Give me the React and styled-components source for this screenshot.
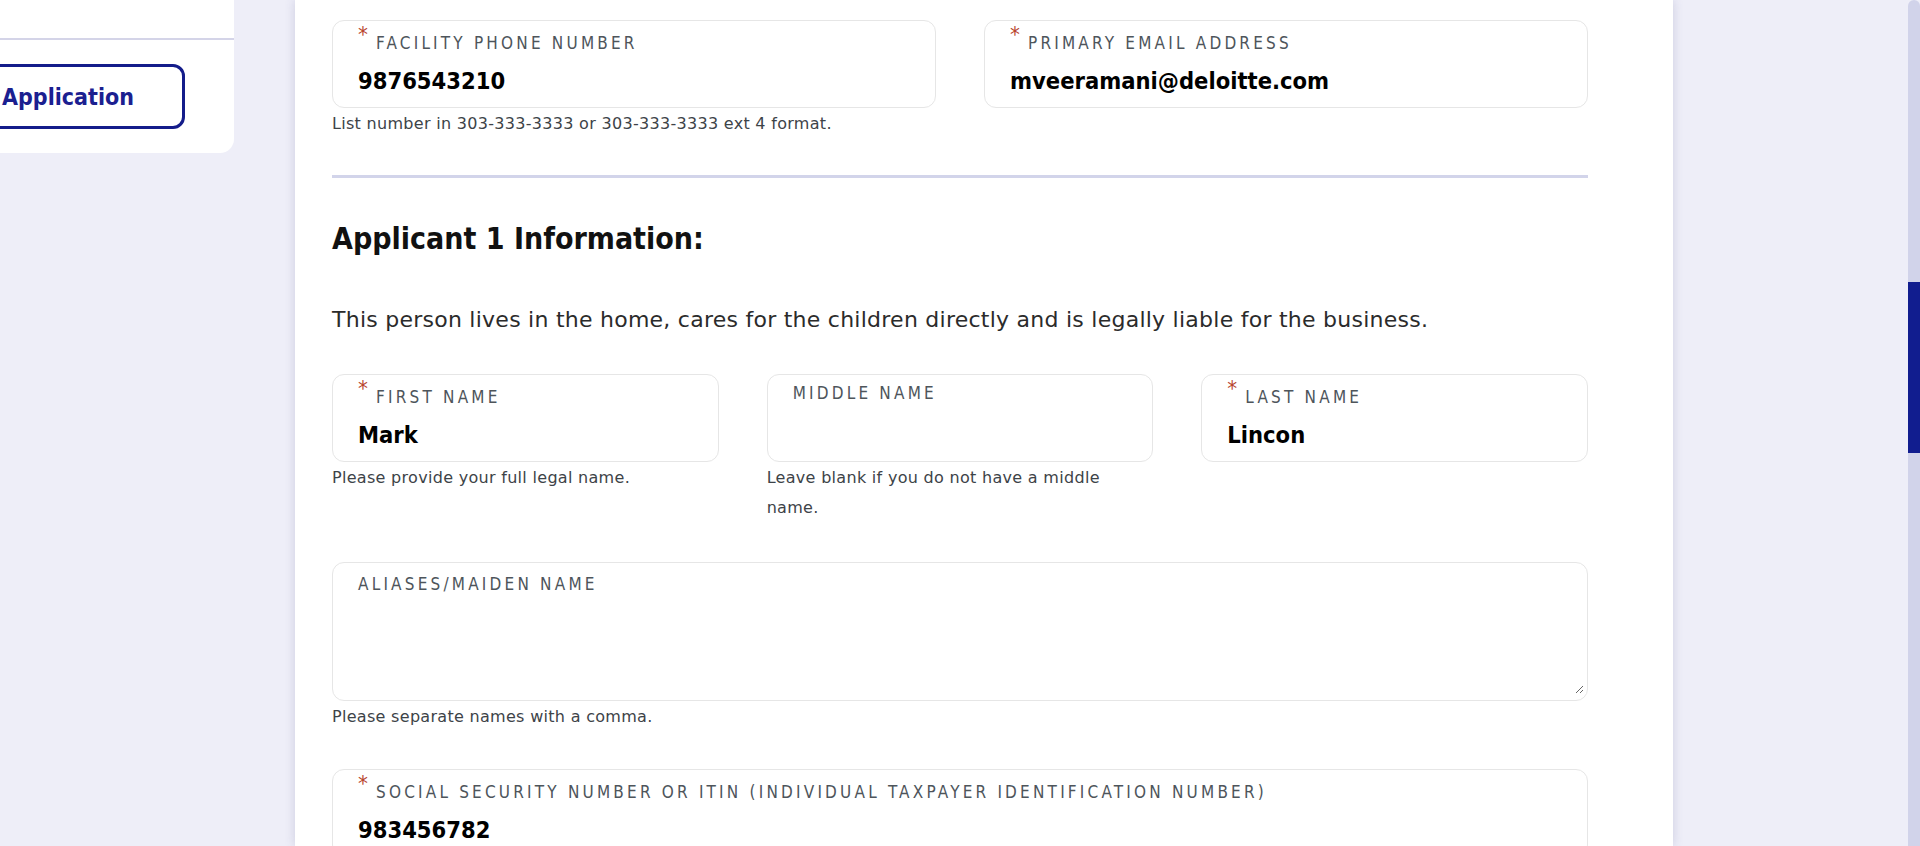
import styled, { createGlobalStyle } from "styled-components";

const GlobalStyle = createGlobalStyle`
  html, body {
    margin: 0;
    padding: 0;
    height: 100%;
    overflow: hidden;
    background: #eeeef8;
  }
  body {
    font-family: "DejaVu Sans Condensed", "DejaVu Sans", sans-serif;
    font-stretch: condensed;
    color: #222;
  }
`;

const Page = styled.div`
  display: flex;
  height: 846px;
  overflow: hidden;
`;

const Sidebar = styled.aside`
  flex: none;
  width: 234px;
  align-self: flex-start;
  background: #fff;
  border-radius: 0 0 14px 0;
  padding-top: 38px;
`;

const SideDivider = styled.div`
  height: 2px;
  background: #d4d4e8;
`;

const SideActions = styled.div`
  display: flex;
  justify-content: flex-end;
  overflow: hidden;
  padding: 24px 49px 24px 0;
`;

const OutlineButton = styled.button`
  flex: none;
  height: 65px;
  padding: 0 48px;
  border: 3px solid #141c8a;
  border-radius: 12px;
  background: #fff;
  color: #1b2090;
  font-family: inherit;
  font-stretch: condensed;
  font-size: 23px;
  font-weight: 700;
  white-space: nowrap;
  cursor: pointer;
`;

const Card = styled.main`
  flex: none;
  box-sizing: border-box;
  width: 1378px;
  margin-left: 61px;
  padding: 20px 85px 0 37px;
  background: #fff;
  box-shadow: 0 0 10px rgba(70, 70, 130, 0.2);
`;

const Grid = styled.div`
  display: grid;
  grid-template-columns: repeat(${({ $cols }) => $cols}, 1fr);
  column-gap: 48px;
  align-items: start;
  margin-top: ${({ $mt }) => $mt || 0}px;
`;

const FieldBox = styled.div`
  box-sizing: border-box;
  height: ${({ $h }) => $h || 88}px;
  display: flex;
  flex-direction: column;
  padding: 3px 20px 0 25px;
  border: 1px solid #e6e6e6;
  border-radius: 12px;
  background: #fff;
`;

const LabelRow = styled.div`
  display: flex;
  align-items: flex-start;
`;

const Star = styled.span`
  flex: none;
  width: 18px;
  font-size: 22px;
  line-height: 22px;
  color: #b8452e;
`;

const Label = styled.label`
  margin-top: ${({ $mt }) => $mt}px;
  font-size: 17px;
  line-height: 20px;
  letter-spacing: 3.2px;
  text-transform: uppercase;
  color: #4e555b;
`;

const Value = styled.div`
  margin-top: 13px;
  font-size: 23.5px;
  line-height: 30px;
  font-weight: 700;
  color: #000;
`;

const TextArea = styled.textarea`
  flex: 1;
  margin: 0 -17px 6px 0;
  border: none;
  outline: none;
  resize: vertical;
  background: transparent;
  font: inherit;
`;

const Helper = styled.p`
  margin: 1px 0 0;
  padding-right: 24px;
  font-family: "DejaVu Sans", sans-serif;
  font-stretch: normal;
  font-size: 16px;
  letter-spacing: 0.3px;
  line-height: 30px;
  color: #3d4348;
`;

const Divider = styled.hr`
  height: 3px;
  margin: 36px 0 0;
  border: 0;
  background: #d2d4ea;
`;

const Heading = styled.h2`
  margin: 43px 0 0;
  font-size: 30px;
  line-height: 36px;
  font-weight: 700;
  color: #111;
`;

const Intro = styled.p`
  margin: 48px 0 0;
  font-family: "DejaVu Sans", sans-serif;
  font-stretch: normal;
  font-size: 22px;
  letter-spacing: 0.25px;
  line-height: 30px;
  color: #2b2b2b;
`;

const ScrollTrack = styled.div`
  flex: none;
  width: 12px;
  margin-left: auto;
  background: #d1d3ea;
  border-radius: 6px 6px 0 0;
`;

const ScrollThumb = styled.div`
  margin-top: 282px;
  height: 171px;
  background: #111d8f;
`;

function Field({ label, value, required, labelTop, helper, height, multiline }) {
  return (
    <div>
      <FieldBox $h={height}>
        <LabelRow>
          {required && <Star>*</Star>}
          <Label $mt={labelTop ?? (required ? 9 : 5)}>{label}</Label>
        </LabelRow>
        {multiline ? <TextArea aria-label={label} /> : <Value>{value}</Value>}
      </FieldBox>
      {helper && <Helper>{helper}</Helper>}
    </div>
  );
}

export default function App() {
  return (
    <>
      <GlobalStyle />
      <Page>
        <Sidebar>
          <SideDivider />
          <SideActions>
            <OutlineButton>Application</OutlineButton>
          </SideActions>
        </Sidebar>
        <Card>
          <Grid $cols={2}>
            <Field
              required
              label="Facility Phone Number"
              value="9876543210"
              helper="List number in 303-333-3333 or 303-333-3333 ext 4 format."
            />
            <Field required label="Primary Email Address" value="mveeramani@deloitte.com" />
          </Grid>
          <Divider />
          <Heading>Applicant 1 Information:</Heading>
          <Intro>
            This person lives in the home, cares for the children directly and is legally liable
            for the business.
          </Intro>
          <Grid $cols={3} $mt={39}>
            <Field
              required
              label="First Name"
              value="Mark"
              helper="Please provide your full legal name."
            />
            <Field
              label="Middle Name"
              value=""
              helper="Leave blank if you do not have a middle name."
            />
            <Field required label="Last Name" value="Lincon" />
          </Grid>
          <Grid $cols={1} $mt={39}>
            <Field
              multiline
              height={139}
              labelTop={8}
              label="Aliases/Maiden Name"
              helper="Please separate names with a comma."
            />
          </Grid>
          <Grid $cols={1} $mt={37}>
            <Field
              required
              label="Social Security Number or ITIN (Individual Taxpayer Identification Number)"
              value="983456782"
            />
          </Grid>
        </Card>
        <ScrollTrack>
          <ScrollThumb />
        </ScrollTrack>
      </Page>
    </>
  );
}
